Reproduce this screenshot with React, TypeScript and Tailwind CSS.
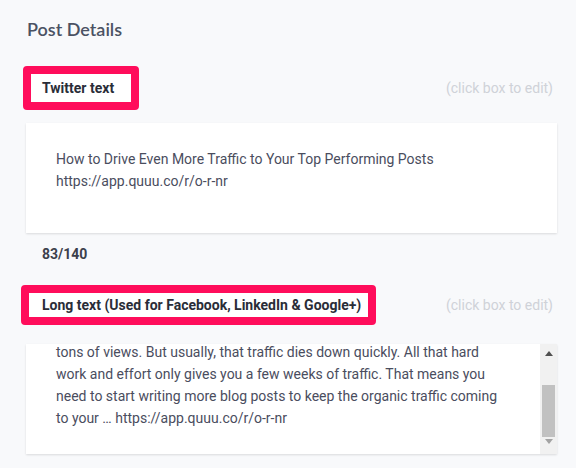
import React from 'react';

const longLines = [
  'tons of views. But usually, that traffic dies down quickly. All that hard',
  'work and effort only gives you a few weeks of traffic. That means you',
  'need to start writing more blog posts to keep the organic traffic coming',
  'to your … https://app.quuu.co/r/o-r-nr',
];

function Label({ text, pad }: { text: string; pad: string }) {
  return (
    <div className={`flex border-[8px] border-[#ff0d5b] rounded-[4px] bg-white leading-[20px] ${pad}`}>
      <span className="text-[14px] font-bold text-[#2a2d38] leading-[20px] whitespace-nowrap">{text}</span>
    </div>
  );
}

function Scrollbar() {
  return (
    <div className="w-[17px] shrink-0 bg-[#f1f1f1] flex flex-col items-center">
      <div className="h-[17px] flex items-center justify-center pt-[1px]">
        <svg width="8" height="5" viewBox="0 0 8 5">
          <path d="M0 5 L4 0 L8 5 Z" fill="#505050" />
        </svg>
      </div>
      <div className="flex-1 w-full px-[2px] pt-[24px] flex">
        <div className="w-full bg-[#c1c1c1]" />
      </div>
      <div className="h-[17px] flex items-start justify-center pt-[2px]">
        <svg width="8" height="5" viewBox="0 0 8 5">
          <path d="M0 0 L4 5 L8 0 Z" fill="#a3a3a3" />
        </svg>
      </div>
    </div>
  );
}

export default function App() {
  return (
    <div
      className="w-[576px] h-[468px] bg-[#f8f9fb] overflow-hidden"
      style={{ fontFamily: 'Roboto, "Liberation Sans", sans-serif' }}
    >
      <div className="pl-[21px] pr-[19px]">
        {/* Title */}
        <div
          className="pl-[6px] pt-[18px] text-[18px] font-semibold text-[#4b5263] leading-[22px]"
          style={{ fontFamily: 'Lato, "Open Sans", sans-serif' }}
        >
          Post Details
        </div>

        {/* Twitter label row */}
        <div className="mt-[26px] flex items-center justify-between">
          <div className="ml-[2px]">
            <Label text="Twitter text" pad="pl-[11px] pr-[17px] py-[4px]" />
          </div>
          <span className="text-[14px] text-[#cfd2d8] pr-[4px]">(click box to edit)</span>
        </div>

        {/* Twitter text card */}
        <div className="mt-[13px] ml-[5px] h-[110px] bg-white shadow-[0_1px_2px_rgba(0,0,0,0.12)] pl-[30px] pt-[25px] text-[14px] leading-[22px] text-[#4a4d5e]">
          <div>How to Drive Even More Traffic to Your Top Performing Posts</div>
          <div>https://app.quuu.co/r/o-r-nr</div>
        </div>

        {/* Counter */}
        <div className="mt-[11px] pl-[21px] text-[14px] font-bold leading-[20px] text-[#3c3f4b]">83/140</div>

        {/* Long text label row */}
        <div className="mt-[21px] flex items-center justify-between">
          <Label text="Long text (Used for Facebook, LinkedIn & Google+)" pad="pl-[13px] pr-[7px] py-[2px]" />
          <span className="text-[14px] text-[#cfd2d8] pr-[4px]">(click box to edit)</span>
        </div>

        {/* Long text card */}
        <div className="mt-[19px] ml-[5px] h-[110px] bg-white shadow-[0_1px_2px_rgba(0,0,0,0.12)] flex">
          <div className="flex-1 overflow-hidden pl-[30px] text-[14px] leading-[22px] text-[#4a4d5e]">
            <div className="-mt-[3px]">
              {longLines.map((l, i) => (
                <div key={i} className="whitespace-nowrap">{l}</div>
              ))}
            </div>
          </div>
          <Scrollbar />
        </div>
      </div>
    </div>
  );
}
